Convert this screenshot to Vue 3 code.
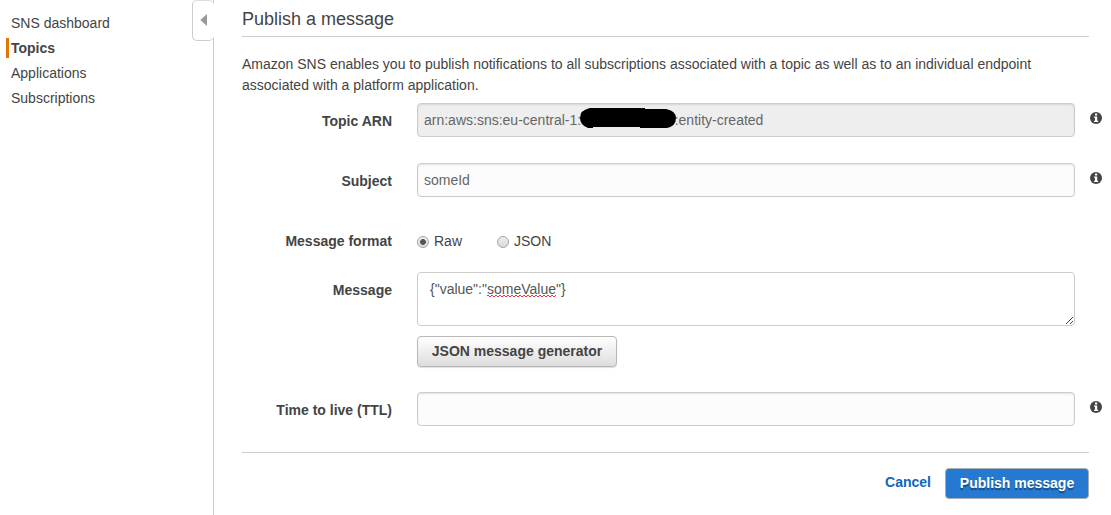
<script setup>
const links = ['SNS dashboard', 'Topics', 'Applications', 'Subscriptions']
const active = 'Topics'
</script>

<template>
  <div class="page">
    <aside class="sidebar">
      <nav class="nav">
        <a v-for="l in links" :key="l" class="link" :class="{ active: l === active }">{{ l }}</a>
      </nav>
      <div class="toggle">
        <svg width="7" height="12" viewBox="0 0 7 12"><path d="M7 0V12L0.3 6Z" fill="#999" /></svg>
      </div>
    </aside>
    <main class="main">
      <h1 class="title">Publish a message</h1>
      <p class="intro">Amazon SNS enables you to publish notifications to all subscriptions associated with a topic as well as to an individual endpoint associated with a platform application.</p>

      <div class="row topic">
        <label class="label">Topic ARN</label>
        <div class="field disabled">
          <span>arn:aws:sns:eu-central-1:</span><span class="gap"></span><span>:entity-created</span>
          <svg class="redact" width="98" height="22" viewBox="0 0 98 22"><path d="M11 1H66V2H87Q97 4 97 11Q97 19 88 21H61V20H14V21H9Q1 18 1 11Q1 3 11 1Z" fill="#000" /></svg>
        </div>
        <svg class="info" viewBox="0 0 12 12"><circle cx="6" cy="6" r="6" fill="#444" /><path d="M5 1.5H7.2V3.5H5ZM4 4.5H7.2V8.7H8.2V10H4V8.7H5V5.7H4Z" fill="#fff" /></svg>
      </div>

      <div class="row subject">
        <label class="label">Subject</label>
        <div class="field">someId</div>
        <svg class="info" viewBox="0 0 12 12"><circle cx="6" cy="6" r="6" fill="#444" /><path d="M5 1.5H7.2V3.5H5ZM4 4.5H7.2V8.7H8.2V10H4V8.7H5V5.7H4Z" fill="#fff" /></svg>
      </div>

      <div class="row format">
        <label class="label">Message format</label>
        <div class="radios">
          <span class="option"><i class="radio checked"></i>Raw</span>
          <span class="option"><i class="radio"></i>JSON</span>
        </div>
      </div>

      <div class="row message">
        <label class="label">Message</label>
        <div class="stack">
          <div class="area">{"value":"<span class="typo">someValue</span>"}
            <svg class="grip" width="8" height="8" viewBox="0 0 8 8" shape-rendering="crispEdges"><path d="M0 7h1v1h-1zM1 6h1v1h-1zM2 5h1v1h-1zM3 4h1v1h-1zM4 3h1v1h-1zM5 2h1v1h-1zM6 1h1v1h-1zM4 7h1v1h-1zM5 6h1v1h-1zM6 5h1v1h-1z" fill="#444" /></svg>
          </div>
          <button class="generator">JSON message generator</button>
        </div>
      </div>

      <div class="row ttl">
        <label class="label">Time to live (TTL)</label>
        <div class="field"></div>
        <svg class="info" viewBox="0 0 12 12"><circle cx="6" cy="6" r="6" fill="#444" /><path d="M5 1.5H7.2V3.5H5ZM4 4.5H7.2V8.7H8.2V10H4V8.7H5V5.7H4Z" fill="#fff" /></svg>
      </div>

      <footer class="footer">
        <a class="cancel">Cancel</a>
        <button class="publish">Publish message</button>
      </footer>
    </main>
  </div>
</template>

<style>
body { background: #fff; overflow: hidden; }
</style>

<style scoped>
* { box-sizing: border-box; }
.page { display: flex; height: 515px; font: 14px/21px "Liberation Sans", Arial, sans-serif; color: #444; }
.sidebar { position: relative; flex: none; width: 214px; border-right: 1px solid #ccc; }
.nav { display: flex; flex-direction: column; gap: 5px; padding: 13px 0 0 6px; }
.link { height: 20px; line-height: 20px; padding-left: 5px; }
.link.active { font-weight: bold; border-left: 3px solid #e07700; padding-left: 2px; }
.toggle { position: absolute; right: -1px; top: 0; width: 22px; height: 41px; border: 1px solid #ccc; border-right: 0; border-top-color: #ddd; border-radius: 5px; background: #fff; padding: 13px 0 0 7px; }
.toggle svg { display: block; }
.main { flex: none; width: 897px; padding-left: 28px; }
.title { margin: 0; width: 847px; height: 37px; padding-top: 8px; border-bottom: 1px solid #ccc; font-size: 18px; line-height: 23px; font-weight: normal; }
.intro { margin: 17px 0 0; width: 830px; height: 42px; }
.row { display: grid; grid-template-columns: 150px 25px 658px 27px; align-items: start; }
.row > :nth-child(2) { grid-column: 3; }
.label { grid-column: 1; font-weight: bold; text-align: right; margin-top: 8px; line-height: 20px; }
.row > .info { grid-column: 4; display: block; width: 12px; height: 12px; margin: 9px 0 0 15px; }
.field { position: relative; display: flex; height: 34px; padding: 0 6px; line-height: 32px; border: 1px solid #ccc; border-radius: 4px; background: #fcfcfc; color: #666; box-shadow: inset 0 1px 2px #0000001a; }
.field.disabled { background: #eee; }
.gap { width: 93.5px; }
.redact { position: absolute; left: 161px; top: 3px; }
.topic { margin-top: 7px; height: 60px; }
.subject { height: 60px; }
.format { height: 49px; }
.radios { display: flex; margin-top: 8px; line-height: 20px; }
.option { display: flex; width: 80px; }
.radio { flex: none; width: 12px; height: 12px; margin: 5px 5px 0 0; border: 1px solid #a5a5a5; border-radius: 50%; background: linear-gradient(#eee, #d8d8d8); }
.radio.checked { background: radial-gradient(circle, #555 0 2.6px, transparent 3.2px), linear-gradient(#eee, #ddd); }
.message { height: 120px; }
.area { position: relative; height: 54px; padding: 6px 12px; line-height: 20px; border: 1px solid #ccc; border-radius: 4px; background: #fff; color: #555; }
.typo { background: linear-gradient(90deg, #f33 50%, transparent 0) 0 14px / 4px 1px repeat-x, linear-gradient(90deg, transparent 50%, #f33 0) 0 15px / 4px 1px repeat-x; }
.grip { position: absolute; right: 0; bottom: 1px; }
button { font: bold 14px/20px "Liberation Sans", Arial, sans-serif; padding: 0; }
.generator { display: block; width: 200px; height: 31px; margin-top: 10px; padding-bottom: 1px; color: #444; border: 1px solid #b8b8b8; border-radius: 4px; background: linear-gradient(#fff, #ddd); box-shadow: 0 1px 1px #0002; }
.ttl { height: 60px; }
.footer { display: flex; justify-content: flex-end; width: 847px; padding-top: 15px; border-top: 1px solid #ccc; }
.cancel { margin: 4px 14px 0 0; font-weight: bold; line-height: 20px; color: #1166bb; }
.publish { width: 144px; height: 31px; padding-bottom: 2px; color: #fff; background: #2579d0; border: 1px solid #a5adb5; border-radius: 4px; text-shadow: 0 2px 1px #0006; }
</style>
